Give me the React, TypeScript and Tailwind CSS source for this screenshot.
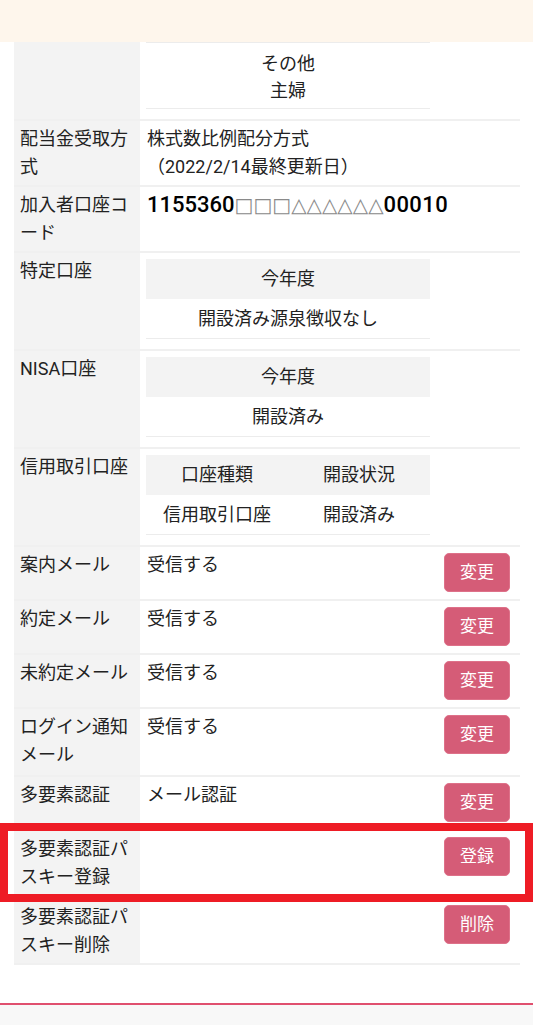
import React from "react";

const font = "font-['Roboto','Noto_Sans_CJK_JP',sans-serif]";

function Row({
  label,
  children,
  action,
  tall,
}: {
  label?: React.ReactNode;
  children?: React.ReactNode;
  action?: string;
  tall?: boolean;
}) {
  return (
    <div className={`flex border-b-2 border-[#f0f0f0] ${tall ? "min-h-[68px]" : ""}`}>
      <div className="w-[126px] shrink-0 bg-[#f3f3f3] px-[6px] py-1 leading-[28px]">
        {label}
      </div>
      <div className="min-w-0 flex-1 px-[7px] py-1 leading-[28px]">
        {children}
      </div>
      <div className="flex w-[84px] shrink-0 justify-end py-1 pr-[10px]">
        {action && (
          <button className="mt-[2px] mb-[3px] h-[39px] w-[66px] rounded-[5px] border border-[#de7189] bg-[#d55c77] text-[17px] text-white">
            {action}
          </button>
        )}
      </div>
    </div>
  );
}

function SubTable({ head, body }: { head: string[]; body: string[] }) {
  return (
    <div className="mt-[2px] mb-[6px] -ml-px w-[284px]">
      <div className="flex border-b border-white bg-[#f3f3f3]">
        {head.map((h) => (
          <div key={h} className="flex-1 py-[6px] text-center leading-[28px]">
            {h}
          </div>
        ))}
      </div>
      <div className="flex border-b border-[#ececec]">
        {body.map((b) => (
          <div key={b} className="flex-1 py-[5px] text-center leading-[28px]">
            {b}
          </div>
        ))}
      </div>
    </div>
  );
}

export default function App() {
  return (
    <div className={`min-h-[1025px] bg-white text-[18px] text-[#222] ${font}`}>
      <div className="h-[42px] bg-[#fef6ec]" />

      <div className="pr-[13px] pl-[14px]">
        {/* tail of the previous row */}
        <div className="flex border-b-2 border-[#f0f0f0]">
          <div className="w-[126px] shrink-0 bg-[#f3f3f3]" />
          <div className="flex-1 px-[7px] pb-1">
            <div className="mb-[6px] -ml-px w-[284px] border-t border-b border-[#ececec] pt-[7px] pb-[4px] text-center leading-[27px]">
              <div>その他</div>
              <div>主婦</div>
            </div>
          </div>
          <div className="w-[84px] shrink-0" />
        </div>

        <Row label="配当金受取方式">
          株式数比例配分方式
          <br />
          （2022/2/14最終更新日）
        </Row>

        <Row label="加入者口座コード">
          <span className="text-[22px] font-medium text-black">1155360</span>
          <span className="font-['DejaVu_Sans',sans-serif] text-[20px] text-[#8a8a8a]">□□□△△△△△△</span>
          <span className="text-[22px] font-medium tracking-[0.4px] text-black">00010</span>
        </Row>

        <Row label="特定口座">
          <SubTable head={["今年度"]} body={["開設済み源泉徴収なし"]} />
        </Row>

        <Row label="NISA口座">
          <SubTable head={["今年度"]} body={["開設済み"]} />
        </Row>

        <Row label="信用取引口座">
          <SubTable head={["口座種類", "開設状況"]} body={["信用取引口座", "開設済み"]} />
        </Row>

        <Row label="案内メール" action="変更">
          受信する
        </Row>
        <Row label="約定メール" action="変更">
          受信する
        </Row>
        <Row label="未約定メール" action="変更">
          受信する
        </Row>
        <Row label="ログイン通知メール" action="変更" tall>
          受信する
        </Row>
        <Row label="多要素認証" action="変更">
          メール認証
        </Row>

        <div className="relative">
          <Row label="多要素認証パスキー登録" action="登録" tall />
          <div className="pointer-events-none absolute -top-2 -right-[13px] -bottom-[3px] -left-[14px] border-8 border-[#ee1c25]" />
        </div>

        <Row label="多要素認証パスキー削除" action="削除" />
      </div>

      <div className="mt-[38px] h-[2px] bg-[#e0506f]" />
      <div className="h-[24px] bg-[#f8f8f8]" />
    </div>
  );
}
